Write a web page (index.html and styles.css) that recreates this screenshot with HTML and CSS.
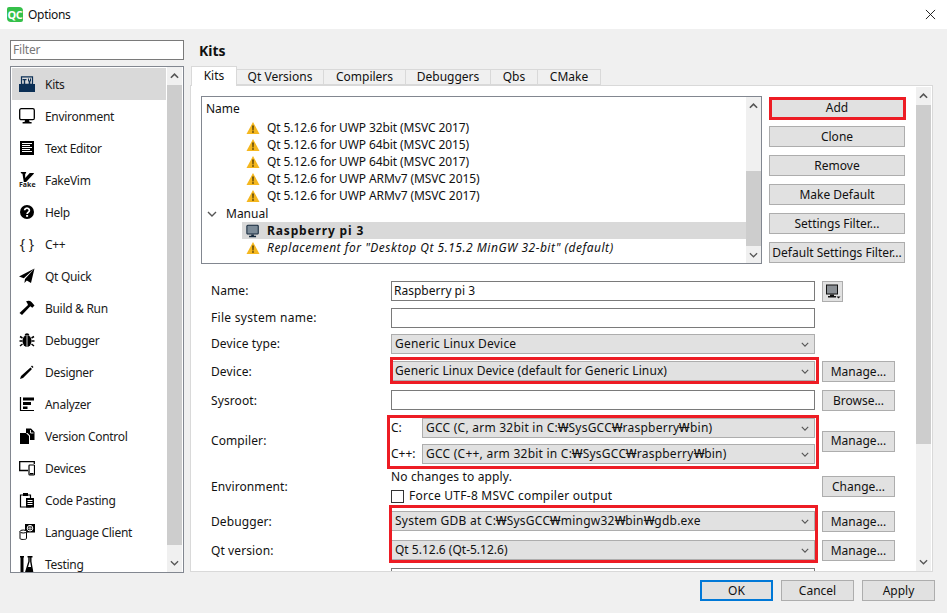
FILE: index.html
```html
<!DOCTYPE html>
<html lang="en">
<head>
<meta charset="utf-8">
<title>Options</title>
<link rel="stylesheet" href="styles.css">
</head>
<body>
<svg class="defs" aria-hidden="true">
  <symbol id="chev" viewBox="0 0 10 6"><path d="M1 1l4 4 4-4" fill="none" stroke="currentColor" stroke-width="1.4"/></symbol>
  <symbol id="up" viewBox="0 0 10 6"><path d="M1 5l4-4 4 4" fill="none" stroke="currentColor" stroke-width="1.8"/></symbol>
  <symbol id="warn" viewBox="0 0 14 14"><path d="M7 1l6.5 12H.5z" fill="#f5b71e"/><path d="M6.300 4.500h1.400l-.2 5h-1zM6.300 10.300h1.400v1.500H6.300z" fill="#3a2c05"/></symbol>
  <symbol id="mon" viewBox="0 0 16 16"><rect x="1" y="1.500" width="13" height="10" rx="1" fill="#7c8b98" stroke="#14283c" stroke-width="1.200"/><path d="M6 12h3v1.500h2.500V15h-8v-1.500H6z" fill="#14283c"/></symbol>
</svg>
<div class="window">
  <header class="titlebar">
    <span class="qc">QC</span>
    <span class="title">Options</span>
    <svg class="close" viewBox="0 0 12 12"><path d="M1 1l10 10M11 1L1 11" stroke="#111" stroke-width="1" fill="none"/></svg>
  </header>
  <div class="main">
    <aside class="side">
      <div class="filter">Filter</div>
      <div class="side-list">
        <nav class="nav">
          <div class="nav-item active">
            <svg class="nav-ico" viewBox="0 0 16 16"><path d="M2.500.800h11v7.500h-11z" fill="none" stroke="#0b2f55" stroke-width="1.200"/><path d="M0 8h16v8H0z" fill="#0b2f55"/><path d="M3.500 3h4v1.200H6.200V8H4.800V4.200H3.500zM9 2.500h1v2h1v-2h1v2.500l-.7.700V8H9.700V5.700L9 5z" fill="#0b2f55"/></svg>
            <span>Kits</span>
          </div>
          <div class="nav-item">
            <svg class="nav-ico" viewBox="0 0 16 16"><rect x=".7" y=".7" width="14.600" height="11" rx="1.500" fill="#fff" stroke="#000" stroke-width="1.300"/><path d="M6 12h4l.6 2h2v1.500h-9V14h2z"/></svg>
            <span>Environment</span>
          </div>
          <div class="nav-item">
            <svg class="nav-ico" viewBox="0 0 16 16"><path d="M1 1h14v14H1z"/><path d="M3 3.500h10M3 5.500h8M3 7.500h10M3 9.500h8M3 11.500h10" stroke="#fff" stroke-width="1"/></svg>
            <span>Text Editor</span>
          </div>
          <div class="nav-item">
            <span class="fake"><svg class="fake-v" viewBox="0 0 16 11"><path d="M1 0h6v1.500L6 2v4.500L11 1h4.500v1L7 11H4.500L3 2 1.500 1.500z"/></svg><span class="fake-t">Fake</span></span>
            <span>FakeVim</span>
          </div>
          <div class="nav-item">
            <svg class="nav-ico" viewBox="0 0 16 16"><circle cx="8" cy="8" r="7"/><path d="M5.600 6.300a2.400 2.200 0 1 1 3.700 1.900c-.9.600-1.200 1-1.200 1.800" fill="none" stroke="#fff" stroke-width="1.700"/><path d="M7.100 11h2v1.800h-2z" fill="#fff"/></svg>
            <span>Help</span>
          </div>
          <div class="nav-item">
            <span class="braces">{ }</span>
            <span>C++</span>
          </div>
          <div class="nav-item">
            <svg class="nav-ico" viewBox="0 0 16 16"><path d="M15.500.5L0 8.500l4.800 1.800L15.500.5zM15.500.5L6 11l-.6 4 2.400-2.600 4.200 2.600z"/></svg>
            <span>Qt Quick</span>
          </div>
          <div class="nav-item">
            <svg class="nav-ico" viewBox="0 0 16 16"><path d="M7 1.500c2-1 4-.8 5.500.5l3 3.500-2.200 2.300-2-1.600-8.300 8.800L.5 13 9 5C8.500 3.500 8 2.500 7 1.500z"/></svg>
            <span>Build &amp; Run</span>
          </div>
          <div class="nav-item">
            <svg class="nav-ico" viewBox="0 0 16 16"><ellipse cx="8" cy="9" rx="4.500" ry="6"/><path d="M5.500 3.200a2.600 2.600 0 0 1 5 0z"/><path d="M8 3v12" stroke="#fff" stroke-width=".8"/><path d="M3.500 6L1 4.500M3.500 9H.5M3.500 12L1 14M12.500 6L15 4.500M12.500 9h3M12.500 12l2.500 2" stroke="#000" stroke-width="1.500"/></svg>
            <span>Debugger</span>
          </div>
          <div class="nav-item">
            <svg class="nav-ico" viewBox="0 0 16 16"><path d="M11.500 3.500l1.500 1.500-9 9-3 1 1-3zM13 1.500l1.500 1.500-1 1L12 2.500z"/></svg>
            <span>Designer</span>
          </div>
          <div class="nav-item">
            <svg class="nav-ico" viewBox="0 0 16 16"><path d="M1.500 1v13.500H15" fill="none" stroke="#000" stroke-width="1.200"/><path d="M4 1.500h11v3H4zM4 6h8v3H4zM4 10.500h4.500v2.500H4z"/></svg>
            <span>Analyzer</span>
          </div>
          <div class="nav-item">
            <svg class="nav-ico" viewBox="0 0 16 16"><path d="M1 5h6l3 3v8H1z"/><path d="M7 .5h5l3.500 3.500v8H11V7.500L8.500 5H7z" fill="#000"/><path d="M11.500 2v3h3" fill="none" stroke="#fff" stroke-width=".9"/></svg>
            <span>Version Control</span>
          </div>
          <div class="nav-item">
            <svg class="nav-ico" viewBox="0 0 16 16"><path d="M9 10.500H.7V1.700h14.600V4" fill="none" stroke="#000" stroke-width="1.300"/><rect x="10" y="5" width="5.500" height="10" rx=".8" fill="#fff" stroke="#000" stroke-width="1.200"/><path d="M11 13h3.500v1.500H11z"/></svg>
            <span>Devices</span>
          </div>
          <div class="nav-item">
            <svg class="nav-ico" viewBox="0 0 16 16"><path d="M1.500 3h10v12h-10z" fill="#fff" stroke="#000" stroke-width="1.200"/><path d="M4 1h5v3H4zM7 6h8v9.500H7z"/><path d="M8.500 8.500h5M8.500 10.500h5M8.500 12.500h5" stroke="#fff"/></svg>
            <span>Code Pasting</span>
          </div>
          <div class="nav-item">
            <svg class="nav-ico" viewBox="0 0 16 16"><path d="M6 0h10v8.500H8.500L6 10z"/><circle cx="11" cy="4.200" r="2.800" fill="none" stroke="#fff"/><path d="M11 1.500v5.500M8.300 4.200h5.500" stroke="#fff" stroke-width=".8"/><path d="M1 7.500v7c0 1.300 6.500 1.300 6.500 0v-7" fill="#fff" stroke="#000"/><ellipse cx="4.250" cy="7.500" rx="3.250" ry="1.500" fill="#fff" stroke="#000"/></svg>
            <span>Language Client</span>
          </div>
          <div class="nav-item">
            <svg class="nav-ico" viewBox="0 0 16 16"><path d="M1 0h4v1.500H4.500V16h-3V1.500H1z"/><path d="M8.500.7h5M10 1v4.500L7 15.300h6.500L11.800 5.500V1" fill="none" stroke="#000" stroke-width="1.400"/><path d="M8.500 11h4l1.500 4.800H7z"/></svg>
            <span>Testing</span>
          </div>
        </nav>
        <div class="vbar">
          <svg class="arrow"><use href="#up"/></svg>
          <div class="thumb side-thumb"></div>
          <div class="track"></div>
          <svg class="arrow"><use href="#chev"/></svg>
        </div>
      </div>
    </aside>
    <section class="content">
      <h1 class="heading">Kits</h1>
      <div class="tabs">
        <div class="tab tab-on">Kits</div>
        <div class="tab w-qt">Qt Versions</div>
        <div class="tab w-comp">Compilers</div>
        <div class="tab w-dbg">Debuggers</div>
        <div class="tab w-qbs">Qbs</div>
        <div class="tab w-cm">CMake</div>
      </div>
      <div class="pane">
        <div class="pane-body">
          <div class="top">
            <div class="tree">
              <div class="tree-main">
                <div class="tree-head">Name</div>
                <div class="tr"><svg class="warn"><use href="#warn"/></svg>Qt 5.12.6 for UWP 32bit (MSVC 2017)</div>
                <div class="tr"><svg class="warn"><use href="#warn"/></svg>Qt 5.12.6 for UWP 64bit (MSVC 2015)</div>
                <div class="tr"><svg class="warn"><use href="#warn"/></svg>Qt 5.12.6 for UWP 64bit (MSVC 2017)</div>
                <div class="tr"><svg class="warn"><use href="#warn"/></svg>Qt 5.12.6 for UWP ARMv7 (MSVC 2015)</div>
                <div class="tr"><svg class="warn"><use href="#warn"/></svg>Qt 5.12.6 for UWP ARMv7 (MSVC 2017)</div>
                <div class="tr-group"><svg class="group-chev"><use href="#chev"/></svg>Manual</div>
                <div class="tr tr-sel"><svg class="warn"><use href="#mon"/></svg>Raspberry pi 3</div>
                <div class="tr tr-it"><svg class="warn"><use href="#warn"/></svg>Replacement for "Desktop Qt 5.15.2 MinGW 32-bit" (default)</div>
              </div>
              <div class="vbar">
                <svg class="arrow"><use href="#up"/></svg>
                <div class="track tree-track"></div>
                <div class="thumb tree-thumb"></div>
                <svg class="arrow"><use href="#chev"/></svg>
              </div>
            </div>
            <div class="actions">
              <div class="btn">Add</div>
              <div class="btn">Clone</div>
              <div class="btn">Remove</div>
              <div class="btn">Make Default</div>
              <div class="btn">Settings Filter...</div>
              <div class="btn">Default Settings Filter...</div>
            </div>
          </div>
          <div class="form">
            <div class="lbl">Name:</div>
            <div class="input">Raspberry pi 3</div>
            <div class="btn icon-btn"><svg class="mon-ico" viewBox="0 0 16 16"><rect x="1.500" y="1" width="11" height="9" fill="#8a8f94" stroke="#111"/><path d="M5 10.500h4v1.500h2v1.500H3V12h2z" fill="#111"/><path d="M11.500 12.500h4l-2 2z" fill="#111"/></svg></div>

            <div class="lbl lbl-wide">File system name:</div>
            <div class="input"></div>
            <div></div>

            <div class="lbl">Device type:</div>
            <div class="combo"><span class="combo-wide">Generic Linux Device</span><svg class="combo-chev"><use href="#chev"/></svg></div>
            <div></div>

            <div class="lbl lbl-low">Device:</div>
            <div class="combo"><span class="combo-text">Generic Linux Device (default for Generic Linux)</span><svg class="combo-chev"><use href="#chev"/></svg></div>
            <div class="btn">Manage...</div>

            <div class="lbl lbl-low">Sysroot:</div>
            <div class="input"></div>
            <div class="btn">Browse...</div>

            <div class="lbl mid">Compiler:</div>
            <div class="compilers">
              <div class="comp-row"><span class="comp-l">C:</span><div class="combo comp-c"><span class="path">GCC (C, arm 32bit in C:<span class="won">₩</span>SysGCC<span class="won">₩</span>raspberry<span class="won">₩</span>bin)</span><svg class="combo-chev"><use href="#chev"/></svg></div></div>
              <div class="comp-row"><span class="comp-l">C++:</span><div class="combo comp-c"><span class="path">GCC (C++, arm 32bit in C:<span class="won">₩</span>SysGCC<span class="won">₩</span>raspberry<span class="won">₩</span>bin)</span><svg class="combo-chev"><use href="#chev"/></svg></div></div>
            </div>
            <div class="btn mid">Manage...</div>

            <div class="lbl env-item">Environment:</div>
            <div class="env">
              <div class="env-note">No changes to apply.</div>
              <label class="check"><span class="box"></span><span class="check-text">Force UTF-8 MSVC compiler output</span></label>
            </div>
            <div class="btn env-item">Change...</div>

            <div class="lbl lbl-low">Debugger:</div>
            <div class="combo"><span class="path">System GDB at C:<span class="won">₩</span>SysGCC<span class="won">₩</span>mingw32<span class="won">₩</span>bin<span class="won">₩</span>gdb.exe</span><svg class="combo-chev"><use href="#chev"/></svg></div>
            <div class="btn">Manage...</div>

            <div class="lbl lbl-low">Qt version:</div>
            <div class="combo"><span>Qt 5.12.6 (Qt-5.12.6)</span><svg class="combo-chev"><use href="#chev"/></svg></div>
            <div class="btn">Manage...</div>

            <div></div>
            <div class="input"></div>
            <div></div>
          </div>
        </div>
        <div class="vbar pane-bar">
          <svg class="arrow"><use href="#up"/></svg>
          <div class="thumb pane-thumb"></div>
          <div class="track"></div>
          <svg class="arrow"><use href="#chev"/></svg>
        </div>
        <div class="hl hl-add"></div>
        <div class="hl hl-device"></div>
        <div class="hl hl-compiler"></div>
        <div class="hl hl-debugger"></div>
      </div>
    </section>
  </div>
  <footer class="footer">
    <div class="btn foot-btn default">OK</div>
    <div class="btn foot-btn">Cancel</div>
    <div class="btn foot-btn">Apply</div>
  </footer>
</div>
</body>
</html>
```
FILE: styles.css
```css
* { box-sizing: border-box; }
html, body { margin: 0; padding: 0; }
body {
  width: 947px;
  height: 613px;
  overflow: hidden;
  background: #f0f0f0;
  color: #111;
  font: 12px/16px "Noto Sans", "Noto Sans CJK KR", sans-serif;
}
.defs { position: absolute; width: 0; height: 0; }
.window { display: flex; flex-direction: column; height: 613px; }

.titlebar { height: 29px; background: #fff; display: flex; align-items: center; padding-left: 7px; flex: none; }
.qc { width: 16px; height: 15px; background: #35c04a; border-radius: 2px 4px 2px 4px; color: #fff; font-size: 11px; font-weight: 700; line-height: 15px; text-align: center; letter-spacing: -.5px; }
.title { margin-left: 5px; letter-spacing: -.3px; }
.close { width: 11px; height: 11px; margin-left: auto; margin-right: 11px; }

.main { display: flex; gap: 6px; padding: 11px 0 0 10px; height: 544px; flex: none; }
.side { width: 174px; display: flex; flex-direction: column; gap: 6px; flex: none; }
.filter { height: 20px; background: #fff; border: 1px solid #7a7a7a; color: #777; padding: 0 2px; line-height: 17px; letter-spacing: -.2px; }
.side-list { height: 507px; border: 1px solid #828790; background: #fff; display: flex; padding-left: 1px; overflow: hidden; }
.nav { width: 154px; height: 505px; padding-top: 1px; overflow: hidden; flex: none; }
.nav-item { height: 32px; display: flex; align-items: center; gap: 10px; padding-left: 7px; color: #1a1a1a; }
.nav-item > span:last-child { padding-top: 2px; letter-spacing: -.3px; }
.nav-item.active { background: #d9d9d9; }
.nav-ico { width: 16px; height: 16px; flex: none; }
.fake { width: 16px; height: 16px; position: relative; flex: none; display: block; }
.fake-v { display: block; width: 16px; height: 10px; }
.fake-t { display: block; font-size: 7px; line-height: 7px; font-weight: 700; margin-top: -1px; }
.braces { width: 16px; flex: none; text-align: center; font-size: 14px; white-space: nowrap; }

.vbar { width: 15px; margin-left: 1px; background: #f0f0f0; display: flex; flex-direction: column; flex: none; }
.arrow { width: 15px; height: 18px; padding: 6px 3px; color: #555; flex: none; display: block; }
.thumb { background: #cdcdcd; flex: none; }
.track { flex: 1; }
.side-thumb { height: 460px; }

.content { width: 743px; flex: none; display: flex; flex-direction: column; }
.heading { margin: 0; height: 26px; padding: 1px 0 0 9px; font-size: 14px; font-weight: 700; line-height: 20px; color: #111; }
.tabs { display: flex; height: 19px; padding-left: 1px; align-items: flex-end; position: relative; z-index: 1; }
.tab { height: 16px; width: 87px; background: #f0f0f0; border: 1px solid #d9d9d9; border-left: 0; text-align: center; line-height: 14px; }
.tab-on { width: 46px; height: 20px; margin-bottom: -1px; background: #fff; border-left: 1px solid #d9d9d9; border-bottom: 0; line-height: 17px; }
.w-comp { width: 82px; }
.w-dbg { width: 85px; }
.w-qbs { width: 47px; }
.w-cm { width: 63px; }

.pane { position: relative; height: 487px; width: 743px; background: #fff; border: 1px solid #d9d9d9; display: flex; overflow: hidden; }
.pane-body { width: 725px; height: 485px; overflow: hidden; padding: 10px 0 0 10px; flex: none; }
.pane-bar { margin: 1px 0 0; height: 484px; }
.pane-thumb { height: 339px; }

.top { display: flex; gap: 7px; height: 168px; }
.tree { width: 561px; height: 168px; border: 1px solid #828790; display: flex; flex: none; background: #fff; }
.tree-main { flex: 1; padding-top: 3px; min-width: 0; }
.tree-head { height: 19px; padding-left: 4px; line-height: 17px; }
.tr { height: 17px; display: flex; align-items: center; padding-left: 44px; white-space: nowrap; letter-spacing: -.09px; }
.tr-group { height: 18px; display: flex; align-items: center; padding: 2px 0 0 5px; }
.group-chev { width: 10px; height: 6px; color: #555; margin-right: 9px; flex: none; }
.warn { width: 14px; height: 14px; margin-right: 7px; flex: none; }
.tr-sel { background: #d9d9d9; margin-left: 40px; padding-left: 4px; font-weight: 700; letter-spacing: .85px; }
.tr-it { font-style: italic; letter-spacing: .5px; }
.tree .vbar { margin-left: 0; }
.tree-track { flex: none; height: 56px; }
.tree-thumb { height: 75px; }

.actions { width: 136px; display: flex; flex-direction: column; gap: 8px; flex: none; padding-top: 1px; }
.btn { height: 21px; background: #e1e1e1; border: 1px solid #adadad; display: flex; align-items: center; justify-content: center; white-space: nowrap; color: #111; }

.form {
  display: grid;
  grid-template-columns: 173px 424px 73px;
  grid-template-rows: 27px 26px 27px 29px 28px 46px 47px 29px 28px 20px;
  column-gap: 7px;
  align-items: start;
  margin-top: 17px;
  padding-left: 10px;
}
.lbl { height: 20px; line-height: 19px; letter-spacing: .1px; }
.lbl-wide { letter-spacing: .3px; }
.lbl-low { padding-top: 1px; }
.mid { align-self: center; }
.input { height: 20px; background: #fff; border: 1px solid #7a7a7a; padding-left: 2px; line-height: 17px; }
.combo { height: 20px; background: #e1e1e1; border: 1px solid #adadad; display: flex; align-items: center; justify-content: space-between; padding: 0 5px 0 3px; white-space: nowrap; }
.combo-chev { width: 8px; height: 5px; color: #555; flex: none; }
.combo-text { letter-spacing: .1px; }
.combo-wide { letter-spacing: .2px; }
.path { letter-spacing: .24px; }
.won { display: inline-block; width: 10.5px; text-align: center; letter-spacing: 0; transform: scaleX(1.35); }
.icon-btn { width: 21px; }
.mon-ico { width: 16px; height: 16px; }
.compilers { display: flex; flex-direction: column; gap: 6px; }
.comp-row { display: flex; align-items: center; }
.comp-l { width: 31px; flex: none; }
.comp-c { flex: 1; }
.env-item { align-self: center; margin-bottom: 2px; }
.env { padding-top: 5px; display: flex; flex-direction: column; gap: 3px; }
.env-note { letter-spacing: .15px; }
.check { display: flex; align-items: center; height: 16px; }
.check-text { letter-spacing: .25px; }
.box { width: 13px; height: 13px; background: #fff; border: 1px solid #333; margin-right: 5px; flex: none; }

.hl { position: absolute; border: 3px solid #ed1c24; pointer-events: none; }
.hl-add { left: 578px; top: 11px; width: 137px; height: 23px; }
.hl-device { left: 199px; top: 271px; width: 429px; height: 27px; }
.hl-compiler { left: 196px; top: 329px; width: 432px; height: 54px; }
.hl-debugger { left: 198px; top: 419px; width: 429px; height: 58px; }

.footer { display: flex; justify-content: flex-end; gap: 8px; padding: 7px 12px 0 0; }
.foot-btn { width: 73px; }
.default { border: 2px solid #0078d7; }
```
